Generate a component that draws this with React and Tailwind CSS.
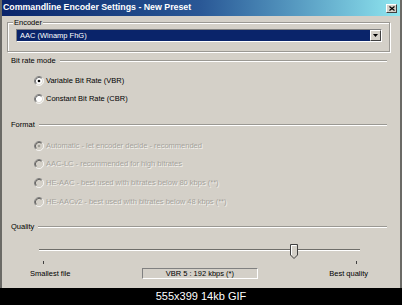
import React from 'react';

const font = { fontFamily: '"Liberation Sans", Arial, sans-serif' };

function Radio({ checked, disabled }) {
  const fill = disabled ? '#d4d0c8' : '#ffffff';
  const dot = disabled ? '#a19f97' : '#000000';
  return (
    <svg width="10" height="10" viewBox="0 0 12 12" className="shrink-0">
      <circle cx="6" cy="6" r="5" fill={fill} />
      <path d="M9.89 2.11 A5.5 5.5 0 0 0 2.11 9.89" fill="none" stroke="#808080" strokeWidth="1" />
      <path d="M2.11 9.89 A5.5 5.5 0 0 0 9.89 2.11" fill="none" stroke="#ffffff" strokeWidth="1" />
      <path d="M9.18 2.82 A4.5 4.5 0 0 0 2.82 9.18" fill="none" stroke="#404040" strokeWidth="1" />
      <path d="M2.82 9.18 A4.5 4.5 0 0 0 9.18 2.82" fill="none" stroke="#d4d0c8" strokeWidth="1" />
      {checked && <circle cx="6" cy="6" r="1.6" fill={dot} />}
    </svg>
  );
}

function Option({ label, checked, disabled, className }) {
  return (
    <div className={`flex h-[9px] items-center gap-[2px] ml-[32px] ${className}`}>
      <Radio checked={checked} disabled={disabled} />
      <span
        className={
          disabled
            ? 'text-[7.5px] leading-[9px] text-[#a5a39c] [text-shadow:1px_1px_0_#f4f3ef]'
            : 'text-[7.5px] leading-[9px] text-black'
        }
      >
        {label}
      </span>
    </div>
  );
}

function Header({ label, className }) {
  return (
    <div className={`flex h-[9px] items-center ml-[9px] mr-[13px] ${className}`}>
      <span className="text-[7.5px] leading-[9px] text-black">{label}</span>
      <div className="ml-[4px] h-[2px] flex-1 border-t border-b border-t-[#9a9893] border-b-white" />
    </div>
  );
}

export default function App() {
  return (
    <div className="flex h-[305px] w-[402px] flex-col bg-black" style={font}>
      <div className="flex h-[288px] flex-col border-x-2 border-x-[#6b6a66] bg-[#d4d0c8]">
        {/* title bar */}
        <div className="flex h-[16px] items-center justify-between bg-gradient-to-r from-[#0a246a] via-[#2a5896] to-[#8fe6ef] pl-[1px] pr-[3px]">
          <span className="text-[8.8px] font-bold text-white">Commandline Encoder Settings - New Preset</span>
          <div className="flex h-[9px] w-[11px] items-center justify-center border border-t-white border-l-white border-b-[#404040] border-r-[#404040] bg-[#d4d0c8]">
            <svg width="6" height="5" viewBox="0 0 6 5">
              <path d="M0.5 0.5 L5.5 4.5 M5.5 0.5 L0.5 4.5" stroke="#000" strokeWidth="1.2" />
            </svg>
          </div>
        </div>

        {/* encoder group */}
        <div className="ml-[5px] mr-[10px] mt-[6px] border border-[#9a9893] pb-[9px] shadow-[inset_1px_1px_0_#ffffff,1px_1px_0_#ffffff]">
          <div className="-mt-[5px] ml-[5px] w-fit bg-[#d4d0c8] px-[1px] text-[7.5px] leading-[9px] text-black">
            Encoder
          </div>
          <div className="ml-[8px] mr-[7px] mt-[2px] flex h-[13px] border border-t-[#808080] border-l-[#808080] border-b-white border-r-white">
            <div className="flex flex-1 items-center bg-[#0a246a] pl-[3px] text-[7.5px] text-white">AAC (Winamp FhG)</div>
            <div className="flex w-[11px] items-center justify-center border border-t-white border-l-white border-b-[#404040] border-r-[#404040] bg-[#d4d0c8]">
              <svg width="5" height="3" viewBox="0 0 5 3">
                <path d="M0 0 L5 0 L2.5 3 Z" fill="#000" />
              </svg>
            </div>
          </div>
        </div>

        <Header label="Bit rate mode" className="mt-[4px]" />
        <Option label="Variable Bit Rate (VBR)" checked className="mt-[11px]" />
        <Option label="Constant Bit Rate (CBR)" className="mt-[9px]" />

        <Header label="Format" className="mt-[17px]" />
        <Option label="Automatic - let encoder decide - recommended" checked disabled className="mt-[12px]" />
        <Option label="AAC-LC - recommended for high bitrates" disabled className="mt-[9px]" />
        <Option label="HE-AAC - best used with bitrates below 80 kbps (**)" disabled className="mt-[10px]" />
        <Option label="HE-AACv2 - best used with bitrates below 48 kbps (**)" disabled className="mt-[10px]" />

        <Header label="Quality" className="mt-[16px]" />

        {/* slider */}
        <div className="relative ml-[37px] mt-[13px] h-[15px] w-[321px]">
          <div className="mt-[5px] h-[2px] border-t border-b border-t-[#6f6e6a] border-b-white" />
          <svg width="8" height="15" viewBox="0 0 8 15" className="absolute left-[251px] top-0">
            <path d="M0.5 0.5 H7.5 V11 L4 14.5 L0.5 11 Z" fill="#d4d0c8" stroke="#404040" strokeWidth="1" />
            <path d="M1.5 11 V1.5 H6.5" fill="none" stroke="#ffffff" strokeWidth="1" />
          </svg>
        </div>
        <div className="ml-[37px] mt-[2px] flex h-[3px] w-[321px] justify-between pl-[4px] pr-[3px]">
          <div className="h-[3px] w-px bg-[#404040]" />
          <div className="h-[3px] w-px bg-[#404040]" />
        </div>

        <div className="ml-[28px] mr-[32px] mt-[4px] flex h-[11px] items-center justify-between">
          <span className="text-[7.5px] leading-[9px] text-black">Smallest file</span>
          <div className="flex h-[11px] w-[116px] items-center justify-center border border-t-[#808080] border-l-[#808080] border-b-white border-r-white text-[7.5px] text-black">
            VBR 5 : 192 kbps (*)
          </div>
          <span className="text-[7.5px] leading-[9px] text-black">Best quality</span>
        </div>
      </div>

      <div className="flex h-[17px] items-center justify-center text-[11px] text-white">555x399 14kb GIF</div>
    </div>
  );
}
